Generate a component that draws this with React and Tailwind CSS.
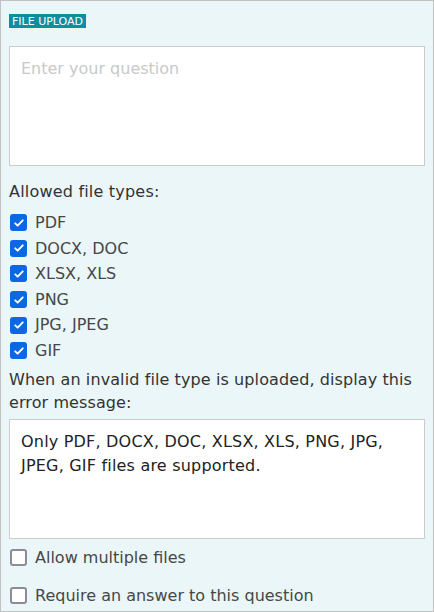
import React from "react";

const fileTypes = ["PDF", "DOCX, DOC", "XLSX, XLS", "PNG", "JPG, JPEG", "GIF"];

function Box({ checked }) {
  if (checked) {
    return (
      <span className="flex h-[17px] w-[17px] shrink-0 items-center justify-center rounded-[3px] bg-[#0b67e2]">
        <svg viewBox="0 0 16 16" className="h-[12px] w-[12px]" fill="none">
          <path d="M3 8.5l3.2 3L13 4.5" stroke="#fff" strokeWidth="2.6" strokeLinecap="round" strokeLinejoin="round" />
        </svg>
      </span>
    );
  }
  return <span className="block h-[17px] w-[17px] shrink-0 rounded-[3px] border-2 border-[#8d8c96] bg-white" />;
}

function Row({ label, checked }) {
  return (
    <label className="flex items-center gap-[8px] pl-[1px] text-[16px] leading-[25.6px] text-[#474747]">
      <Box checked={checked} />
      <span>{label}</span>
    </label>
  );
}

export default function App() {
  return (
    <div
      className="box-border flex h-[612px] w-[434px] flex-col border border-[#c2c2c2] bg-[#eaf6f8] px-[8px] pt-[13px]"
      style={{ fontFamily: "'DejaVu Sans', sans-serif" }}
    >
      <div className="flex">
        <span className="flex h-[14px] items-center bg-[#0e8e9e] px-[3px] text-[11px] leading-none text-white">
          FILE UPLOAD
        </span>
      </div>

      <div className="mt-[18px] h-[120px] border border-[#cccccc] bg-white px-[11px] pt-[10px] text-[16px] leading-[24px] text-[#c9c9c9]">
        Enter your question
      </div>

      <div className="mt-[14px] text-[16px] leading-[23px] tracking-[0.2px] text-[#333]">Allowed file types:</div>

      <div className="mt-[7px] flex flex-col">
        {fileTypes.map((t) => (
          <Row key={t} label={t} checked />
        ))}
      </div>

      <div className="mt-[4px] text-[16px] leading-[23px] tracking-[0.1px] text-[#333]">
        When an invalid file type is uploaded, display this error message:
      </div>

      <div className="mt-[5px] h-[120px] border border-[#cccccc] bg-white px-[11px] pt-[10px] text-[16px] leading-[24px] tracking-[0.2px] text-[#222]">
        Only PDF, DOCX, DOC, XLSX, XLS, PNG, JPG, JPEG, GIF files are supported.
      </div>

      <div className="mt-[6px] flex flex-col gap-[13px]">
        <Row label="Allow multiple files" />
        <Row label="Require an answer to this question" />
      </div>
    </div>
  );
}
